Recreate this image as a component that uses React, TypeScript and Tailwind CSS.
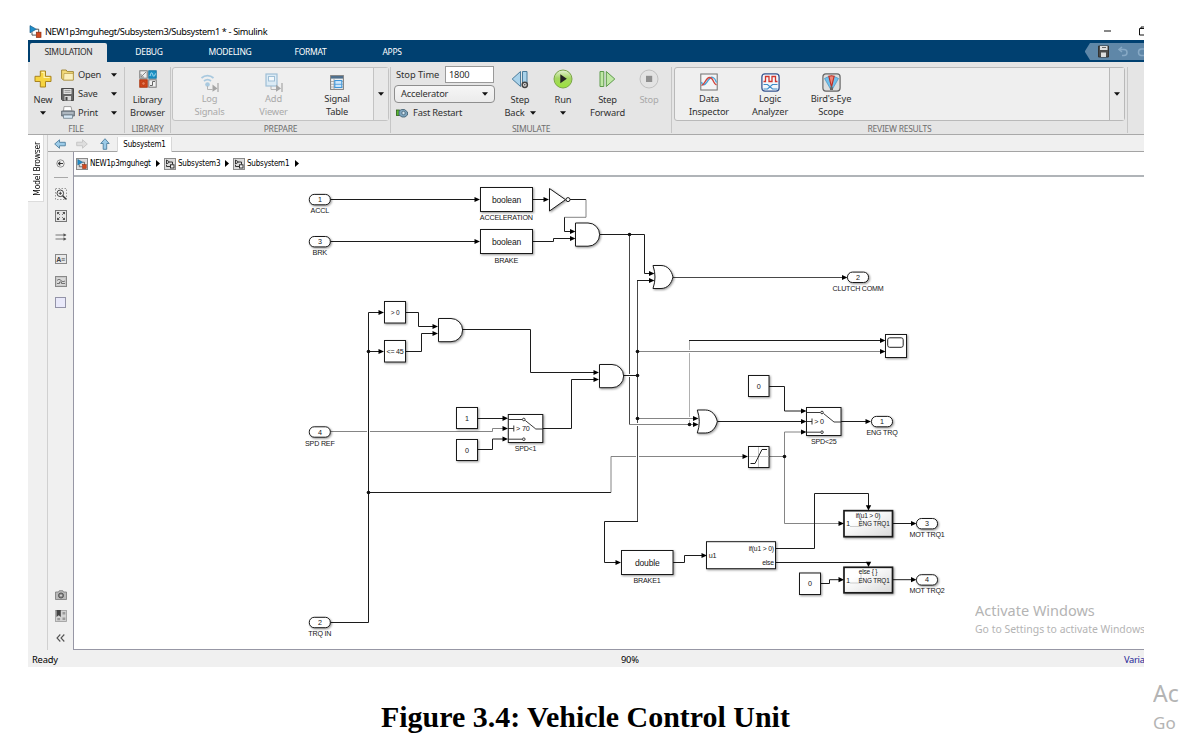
import React from 'react';
import type { ReactNode } from 'react';

/* ---------- small helpers ---------- */

function Caret({ className = '' }: { className?: string }) {
  return (
    <svg className={`h-[4px] w-[6px] shrink-0 ${className}`} viewBox="0 0 6 4">
      <path d="M0 .3h6L3 3.8z" fill="#111" />
    </svg>
  );
}

function Floppy({ className = '' }: { className?: string }) {
  return (
    <svg className={`shrink-0 ${className}`} viewBox="0 0 13 13">
      <path d="M.5.5h12v12h-11l-1-1z" fill="#666" stroke="#4a4a4a" />
      <rect x="2.5" y="1" width="8" height="5" fill="#e2e2e2" />
      <path d="M3.5 2.5h6M3.5 4.3h6" stroke="#888" strokeWidth=".8" />
      <rect x="3.5" y="8" width="6.5" height="4.5" fill="#d8d8d8" />
      <rect x="4.5" y="9" width="2" height="3.5" fill="#444" />
    </svg>
  );
}

function ModelIcon({ className = '' }: { className?: string }) {
  return (
    <svg className={`shrink-0 ${className}`} viewBox="0 0 13 13">
      <path d="M7 4.2h2.700V8M3 7.200v2.900h4" fill="none" stroke="#444" strokeWidth=".9" />
      <path d="M1 .6l6.300 3.600L1 7.800z" fill="#1f8fcb" stroke="#1b5c86" strokeWidth=".7" />
      <rect x="7.300" y="7.200" width="4.700" height="5.200" fill="#d5491d" stroke="#8c2c0f" strokeWidth=".7" />
    </svg>
  );
}

/* ---------- ribbon ---------- */

function Group({ label, className, children }: { label: string; className: string; children?: ReactNode }) {
  return (
    <div className={`flex h-full shrink-0 flex-col pt-[4px] ${className}`}>
      <div className="flex h-[56px] shrink-0">{children}</div>
      <div className="h-[13px] text-center text-[8.5px] leading-[14px] tracking-[-0.25px] text-[#6e6e6e]">{label}</div>
    </div>
  );
}

function Divider() {
  return <div className="mt-[5px] h-[66px] w-px shrink-0 bg-[#c6c6c6]" />;
}

function Tool({ icon, lines, className, muted = false, boxed = false, caret = '' }: {
  icon: ReactNode; lines: string[]; className: string; muted?: boolean; boxed?: boolean; caret?: '' | 'inline' | 'below';
}) {
  return (
    <div className={`flex shrink-0 flex-col items-center ${className}`}>
      <div className="flex h-[20px] shrink-0 items-center justify-center">{icon}</div>
      <div className={`text-center text-[9.3px] leading-[12.5px] tracking-[-0.17px] whitespace-nowrap ${boxed ? 'pt-px' : 'pt-[5px]'} ${muted ? 'text-[#a9a9a9]' : 'text-[#303030]'}`}>
        {lines.map((l, i) => (
          <div key={l} className="flex items-center justify-center">
            {l}
            {caret === 'inline' && i === lines.length - 1 && <Caret className="ml-[5px]" />}
          </div>
        ))}
      </div>
      {caret === 'below' && <Caret className="mt-[4px]" />}
    </div>
  );
}

const PlusIcon = (
  <svg className="h-[18px] w-[18px]" viewBox="0 0 18 18">
    <path d="M6.3 1h5.2v5.3H17v5.2h-5.5V17H6.3v-5.5H1V6.3h5.3z" fill="#f6d441" stroke="#a98420" strokeWidth="1" />
    <path d="M7.5 2.3h2.6v5.2h5.5" fill="none" stroke="#fff3b0" strokeWidth="1.2" />
  </svg>
);

const LibraryIcon = (
  <svg className="h-[18px] w-[18px]" viewBox="0 0 18 18">
    <rect x=".8" y=".8" width="7.4" height="7.4" fill="#eee" stroke="#777" />
    <path d="M2 7l5-5M2 4v3h3" stroke="#888" fill="none" />
    <rect x="9.8" y=".8" width="7.4" height="7.4" fill="#1c93c7" stroke="#1674a0" />
    <path d="M11 6c1-4 2-4 2.700-1.500S15.500 7 16.500 3.500" stroke="#bfe6f6" fill="none" strokeWidth=".9" />
    <rect x=".8" y="9.800" width="7.4" height="7.4" fill="#d4471b" stroke="#a7330f" />
    <circle cx="4.500" cy="13.500" r="1.800" fill="#e87b55" stroke="#a7330f" strokeWidth=".7" />
    <rect x="9.800" y="9.800" width="7.4" height="7.4" fill="#f1f1f1" stroke="#777" />
    <path d="M11 15.500h2.500v-4H16" stroke="#666" fill="none" />
  </svg>
);

const LogIcon = (
  <svg className="h-[20px] w-[20px]" viewBox="0 0 20 20" fill="none">
    <path d="M1.500 6a9 9 0 0 1 12 0M4 9a5.500 5.500 0 0 1 7 0" stroke="#a9c9df" strokeWidth="1.700" />
    <circle cx="7.500" cy="12.500" r="2.300" fill="#a9c9df" />
    <path d="M7.500 14v3.500h5" stroke="#b5b5b5" />
    <path d="M12.500 12.500l5 4-5 3.300z" fill="#a5a5a5" />
    <path d="M18 11v9" stroke="#a5a5a5" strokeWidth="1.200" />
  </svg>
);

const ViewerIcon = (
  <svg className="h-[20px] w-[20px]" viewBox="0 0 20 20" fill="none">
    <rect x="2" y="2" width="11" height="12" fill="#dcebf5" stroke="#9fbfd6" strokeWidth="1.200" />
    <rect x="4.500" y="4.500" width="6" height="4.500" fill="#f3f8fb" stroke="#9fbfd6" />
    <path d="M7 14v3.500h5" stroke="#b5b5b5" />
    <path d="M12 12.500l5 4-5 3.300z" fill="#a5a5a5" />
    <path d="M18 11v9" stroke="#a5a5a5" strokeWidth="1.200" />
  </svg>
);

const TableIcon = (
  <svg className="h-[15px] w-[14px]" viewBox="0 0 14 15" fill="none">
    <rect x=".6" y=".6" width="12.800" height="13.800" fill="#f4f4f4" stroke="#7d7d7d" />
    <rect x="1" y="1" width="12" height="2.600" fill="#4f6f8c" />
    <path d="M1 6.500h12M1 9.300h12M1 12h12M4 3.500v11" stroke="#9c9c9c" strokeWidth=".8" />
    <rect x="4.800" y="5.500" width="7" height="7" fill="#cfe7fb" stroke="#3f97da" strokeWidth="1.100" />
    <path d="M5 9.300h6.600" stroke="#3f97da" strokeWidth=".8" />
  </svg>
);

const StepBackIcon = (
  <svg className="h-[19px] w-[18px]" viewBox="0 0 18 19">
    <path d="M9.500 1.500v15L1.200 9z" fill="#a9d2ea" stroke="#4b7c9b" />
    <path d="M11.500 1.500h4.500v12h-4.500z" fill="#a9d2ea" stroke="#4b7c9b" />
    <circle cx="13.800" cy="14.800" r="2.600" fill="#ddd" stroke="#444" strokeWidth="1.500" />
    <circle cx="13.800" cy="14.800" r=".8" fill="#444" />
  </svg>
);

const RunIcon = (
  <svg className="h-[20px] w-[20px]" viewBox="0 0 20 20">
    <defs>
      <linearGradient id="run" x1="0" y1="0" x2="0" y2="1">
        <stop offset="0" stopColor="#e6f2d8" />
        <stop offset=".45" stopColor="#a5d663" />
        <stop offset="1" stopColor="#9be23a" />
      </linearGradient>
    </defs>
    <circle cx="10" cy="10" r="9" fill="url(#run)" stroke="#7ba648" strokeWidth="1" />
    <path d="M7.300 5.300v9l6.500-4.500z" fill="#222" />
  </svg>
);

const StepForwardIcon = (
  <svg className="h-[18px] w-[17px]" viewBox="0 0 17 18">
    <path d="M1 1.500h3.800v15H1zM7.300 1.500v15L15.800 9z" fill="#bfe8a5" stroke="#5d9a4b" />
  </svg>
);

const StopIcon = (
  <svg className="h-[20px] w-[20px]" viewBox="0 0 20 20">
    <circle cx="10" cy="10" r="9" fill="#e3e3e3" stroke="#c0c0c0" />
    <rect x="7" y="6.800" width="6.200" height="6.200" fill="#8f8f8f" />
  </svg>
);

const InspectorIcon = (
  <svg className="h-[18px] w-[18px]" viewBox="0 0 18 18" fill="none">
    <rect x=".8" y="1" width="16.400" height="16" fill="#f5f5f5" stroke="#707070" />
    <path d="M1.500 9C2.500 13 4.500 12.500 7 9s3.500-5.500 6-4.500c2 .8 2.800 3 3.500 5" stroke="#4aa3d8" strokeWidth="1.300" />
    <path d="M1.500 12.500C5 11.500 6 4.500 9.500 4.500c2.500 0 3 1.800 4 4s2 3 3 3.500" stroke="#d0433c" strokeWidth="1.300" />
  </svg>
);

const LogicIcon = (
  <svg className="h-[19px] w-[19px]" viewBox="0 0 19 19" fill="none">
    <rect x=".9" y=".9" width="17.200" height="17.200" rx="3" fill="#f3f6fb" stroke="#37548f" strokeWidth="1.300" />
    <path d="M2.500 8.500h2v-5H8v5h3v-5h3.500v5h2" stroke="#d0342c" strokeWidth="1.300" />
    <path d="M2.500 11.500h4l5 4.500h5M2.500 16h4l5-4.500h5" stroke="#3f8dc9" strokeWidth="1.200" />
  </svg>
);

const BirdIcon = (
  <svg className="h-[19px] w-[19px]" viewBox="0 0 19 19" fill="none">
    <rect x=".9" y=".9" width="17.200" height="17.200" rx="3" fill="#dedede" stroke="#676767" strokeWidth="1.200" />
    <path d="M2.500 5.500Q9.500 1 16.500 5.500L10.500 16h-2z" fill="#6fc0ec" stroke="#3a88b8" strokeWidth=".6" />
    <path d="M6.800 3.200q2.700-1 5.400 0L9.500 14z" fill="#ef8577" stroke="#bd2e24" strokeWidth="1.100" />
    <path d="M8 17v-2.500l1.500-1.500 1.500 1.500V17z" fill="#666" />
  </svg>
);

function FileRow({ icon, label }: { icon: ReactNode; label: string }) {
  return (
    <div className="flex h-[19px] items-center">
      <div className="flex w-[17px] items-center">{icon}</div>
      <span className="w-[33px] text-[9.300px] tracking-[-0.2px] text-[#303030]">{label}</span>
      <Caret />
    </div>
  );
}

function Ribbon() {
  return (
    <div className="flex h-[73px] shrink-0 overflow-hidden border-b border-[#a9a9a9] bg-[#e5e5e5]">
      <Group label="FILE" className="w-[96px]">
        <Tool icon={PlusIcon} lines={['New']} className="w-[30px] pt-[3px]" caret="below" />
        <div className="flex flex-col pl-[3px]">
          <FileRow label="Open" icon={
            <svg className="h-[12px] w-[13px]" viewBox="0 0 13 12">
              <path d="M.6 1h4.600l1 1.600h6.200V11H2.500L.6 9.500z" fill="#f2d978" stroke="#9c8130" strokeWidth=".9" />
              <path d="M3 4.500h9.300V11H2.600z" fill="#fbf0bd" stroke="#b59a46" strokeWidth=".7" />
            </svg>} />
          <FileRow label="Save" icon={<Floppy className="h-[13px] w-[13px]" />} />
          <FileRow label="Print" icon={
            <svg className="h-[13px] w-[14px]" viewBox="0 0 14 13">
              <path d="M3 .6h7l1 4.400H2.500z" fill="#fff" stroke="#888" strokeWidth=".8" />
              <path d="M.6 5h12.800v5H.6z" fill="#8d97a1" stroke="#59636d" strokeWidth=".8" />
              <path d="M1.500 7h11" stroke="#cfd8e0" />
              <path d="M2.500 9h9v3.300h-9z" fill="#d7e8f5" stroke="#6d7d8b" strokeWidth=".8" />
            </svg>} />
        </div>
      </Group>
      <Divider />
      <Group label="LIBRARY" className="w-[45px]">
        <Tool icon={LibraryIcon} lines={['Library', 'Browser']} className="w-[45px] pt-[3px]" />
      </Group>
      <Divider />
      <Group label="PREPARE" className="w-[219px]">
        <div className="mt-px ml-px flex h-[54px] w-[217px] rounded-[3px] border border-[#c3c3c3] bg-[#efefef]">
          <Tool boxed muted icon={LogIcon} lines={['Log', 'Signals']} className="w-[73px] pt-[4px]" />
          <Tool boxed muted icon={ViewerIcon} lines={['Add', 'Viewer']} className="w-[55px] pt-[4px]" />
          <Tool boxed icon={TableIcon} lines={['Signal', 'Table']} className="w-[72px] pt-[4px]" />
          <div className="flex grow items-center justify-center border-l border-[#c3c3c3] bg-[#e8e8e8]"><Caret /></div>
        </div>
      </Group>
      <Divider />
      <Group label="SIMULATE" className="w-[280px]">
        <div className="flex w-[104px] flex-col pl-[3px] text-[9.300px] tracking-[-0.2px] text-[#303030]">
          <div className="flex h-[17px] items-center">
            <span className="w-[51px] pl-[2px] tracking-[-0.05px] whitespace-nowrap">Stop Time</span>
            <div className="flex h-[17px] w-[49px] items-center border border-[#9a9a9a] bg-white pl-[3px]">1800</div>
          </div>
          <div className="mt-[2px] flex h-[18px] w-[101px] items-center justify-between rounded-[4px] border border-[#8e8e8e] bg-linear-to-b from-[#f6f6f6] to-[#ebebeb] pr-[6px] pl-[6px]">
            Accelerator<Caret />
          </div>
          <div className="mt-[1px] flex h-[18px] items-center pl-[2px]">
            <svg className="mr-[5px] h-[10px] w-[12px]" viewBox="0 0 12 10">
              <rect x=".5" y="2" width="3" height="5.500" fill="#59b82f" stroke="#2c5d1a" strokeWidth=".8" />
              <path d="M3 3l2.500-1.500h3L11.500 4v3L9 9H6L3 7z" fill="#7ca3bd" stroke="#3e5a6c" strokeWidth=".8" />
              <circle cx="7.500" cy="5" r="1.700" fill="#d3e6f2" stroke="#3e5a6c" strokeWidth=".7" />
            </svg>
            <span className="whitespace-nowrap">Fast Restart</span>
          </div>
        </div>
        <Tool icon={StepBackIcon} lines={['Step', 'Back']} className="w-[50px] pt-[3px]" caret="inline" />
        <Tool icon={RunIcon} lines={['Run']} className="w-[36px] pt-[3px]" caret="below" />
        <Tool icon={StepForwardIcon} lines={['Step', 'Forward']} className="w-[53px] pt-[3px]" />
        <Tool muted icon={StopIcon} lines={['Stop']} className="w-[30px] pt-[3px]" />
      </Group>
      <Divider />
      <Group label="REVIEW RESULTS" className="w-[455px]">
        <div className="mt-px ml-[2px] flex h-[54px] w-[451px] rounded-[3px] border border-[#b9b9b9] bg-[#efefef]">
          <Tool boxed icon={InspectorIcon} lines={['Data', 'Inspector']} className="w-[68px] pt-[4px]" />
          <Tool boxed icon={LogicIcon} lines={['Logic', 'Analyzer']} className="w-[54px] pt-[4px]" />
          <Tool boxed icon={BirdIcon} lines={["Bird's-Eye", 'Scope']} className="w-[68px] pt-[4px]" />
          <div className="ml-auto flex w-[15px] items-center justify-center border-l border-[#b9b9b9] bg-[#eaeaea]"><Caret /></div>
        </div>
      </Group>
      <Divider />
    </div>
  );
}

function MenuTab({ label, className }: { label: string; className: string }) {
  return <div className={`flex shrink-0 items-center justify-center ${className}`}>{label}</div>;
}

function MenuBar() {
  return (
    <div className="flex h-[22px] shrink-0 overflow-hidden bg-[#004070] text-[8.500px] tracking-[-0.3px] text-white">
      <MenuTab label="SIMULATION" className="mt-[3px] ml-[2px] w-[77px] rounded-t-[2px] bg-[#e5e5e5] tracking-[-0.35px] text-[#2f2f2f]" />
      <MenuTab label="DEBUG" className="w-[84px] pt-[2px]" />
      <MenuTab label="MODELING" className="w-[78px] pt-[2px]" />
      <MenuTab label="FORMAT" className="w-[83px] pt-[2px]" />
      <MenuTab label="APPS" className="w-[80px] pt-[2px]" />
      <div className="mt-[3px] ml-auto flex h-[17px] w-[60px] shrink-0">
        <svg className="h-[17px] w-[60px]" viewBox="0 0 60 17" fill="none">
          <path d="M6 0h54v17H6L1 9V8z" fill="#5f87a8" />
          <path d="M14.500 3h10v11h-10z" fill="#4c4c4c" stroke="#333" />
          <path d="M16 3h7.500v4H16zM17 9.500h5V14h-5z" fill="#dedede" />
          <path d="M18 4.500h4" stroke="#666" />
          <path d="M38 4l-3 2.500L38 9M35.500 6.500h4.500c4 0 4 6 0 6h-2" stroke="#87a9c5" strokeWidth="1.500" />
          <path d="M60 6h-2.500c-4 0-4 6.500 0 6.500H60" stroke="#87a9c5" strokeWidth="1.500" />
        </svg>
      </div>
    </div>
  );
}

/* ---------- navigation ---------- */

function NavArrow({ className, fill, stroke }: { className: string; fill: string; stroke: string }) {
  return (
    <svg className={`h-[10px] w-[12px] shrink-0 ${className}`} viewBox="0 0 12 10">
      <path d="M.7 5L5.500.8v2.500h5.800v3.500H5.500v2.500z" fill={fill} stroke={stroke} strokeWidth=".9" />
    </svg>
  );
}

function SubsystemIcon() {
  return (
    <svg className="h-[12px] w-[12px] shrink-0" viewBox="0 0 12 12" fill="none">
      <rect x=".5" y=".5" width="11" height="11" fill="#dcdcdc" stroke="#8a8a8a" />
      <path d="M2.500 2l3 2-3 2zM5.500 4h3v2.500M2.500 7v1.500h3.500" stroke="#222" strokeWidth=".9" />
      <rect x="6.500" y="6.800" width="3.500" height="3.200" fill="#f3f3f3" stroke="#222" strokeWidth=".9" />
    </svg>
  );
}

function Crumb({ icon, label, className }: { icon: ReactNode; label: string; className: string }) {
  return (
    <div className={`flex shrink-0 items-center ${className}`}>
      {icon}
      <span className="ml-[2px] grow pt-px whitespace-nowrap">{label}</span>
      <svg className="h-[7px] w-[4px] shrink-0" viewBox="0 0 4 7"><path d="M0 0l4 3.500L0 7z" fill="#000" /></svg>
    </div>
  );
}

function ToolStrip() {
  const box = 'flex h-[21.8px] w-[26px] shrink-0 items-center justify-center';
  return (
    <div className="flex w-[25px] shrink-0 flex-col items-center bg-[#f0f0f0] pb-px">
      <div className="flex h-[23px] shrink-0 items-center justify-center">
        <svg className="h-[9px] w-[9px]" viewBox="0 0 9 9" fill="none">
          <circle cx="4.500" cy="4.500" r="3.700" stroke="#777" strokeWidth=".8" />
          <path d="M7 4.500H2.500M4.300 2.700L2.500 4.500l1.800 1.800" stroke="#333" strokeWidth="1.100" />
        </svg>
      </div>
      <div className="mt-[2px] h-px w-[14px] shrink-0 bg-[#a8a8a8]" />
      <div className="h-[5px] shrink-0" />
      <div className={box}>
        <svg className="h-[12px] w-[12px]" viewBox="0 0 12 12" fill="none">
          <rect x=".5" y=".5" width="11" height="11" stroke="#999" strokeDasharray="1.500 1.500" />
          <circle cx="5.300" cy="5.300" r="3.300" fill="#f4f4f4" stroke="#444" />
          <path d="M3.700 5.300h3.200M5.300 3.700v3.200" stroke="#333" strokeWidth=".9" />
          <path d="M7.700 7.700l3.500 3.500" stroke="#333" strokeWidth="1.600" />
        </svg>
      </div>
      <div className={box}>
        <svg className="h-[12px] w-[12px]" viewBox="0 0 12 12" fill="none">
          <rect x=".5" y=".5" width="11" height="11" fill="#e6e6e6" stroke="#777" />
          <path d="M2 2h2.600L2 4.600zM10 2v2.600L7.400 2zM10 10H7.400L10 7.400zM2 10V7.400L4.600 10z" fill="#444" />
          <path d="M2 2l2.800 2.800M10 2L7.200 4.800M10 10L7.200 7.200M2 10l2.800-2.800" stroke="#555" strokeWidth=".9" />
        </svg>
      </div>
      <div className={box}>
        <svg className="h-[8px] w-[12px]" viewBox="0 0 12 8" fill="none">
          <path d="M.5 2h10M.5 6h10" stroke="#777" />
          <path d="M8.500.2L11.500 2l-3 1.800zM8.500 4.200l3 1.800-3 1.800z" fill="#555" />
        </svg>
      </div>
      <div className={box}>
        <div className="flex h-[10px] w-[12px] items-center justify-center border border-[#888] bg-[#e9e9e9] font-['Liberation_Sans',sans-serif] text-[7px] leading-none font-bold tracking-[-0.3px] text-[#444]">A≡</div>
      </div>
      <div className={box}>
        <svg className="h-[11px] w-[12px]" viewBox="0 0 12 11" fill="none">
          <rect x=".5" y=".5" width="11" height="10" fill="#c9c9c9" stroke="#888" />
          <rect x="2" y="2" width="8" height="7" fill="#dadada" />
          <path d="M2 4.500c1.500-1.500 2.500-1.500 4 0s2.500 1.200 4 .5M2 7.500h2.500V6H6.500v1.500H10" stroke="#666" strokeWidth=".9" />
        </svg>
      </div>
      <div className={box}><div className="h-[11px] w-[11px] border border-[#9393a8] bg-[#e9e9fa]" /></div>
      <div className="grow" />
      <div className={box}>
        <svg className="h-[10px] w-[12px]" viewBox="0 0 12 10" fill="none">
          <path d="M.5 2h3l.8-1.300h3.500L8.500 2h3v7.500H.5z" fill="#b9b9b9" stroke="#777" strokeWidth=".8" />
          <circle cx="6" cy="5.500" r="2.500" fill="#888" stroke="#555" />
          <circle cx="6" cy="5.500" r=".9" fill="#ddd" />
        </svg>
      </div>
      <div className={box}>
        <svg className="h-[12px] w-[12px]" viewBox="0 0 12 12">
          <rect x=".5" y=".5" width="11" height="11" fill="#d3d3d3" stroke="#999" strokeWidth=".8" />
          <path d="M1.500 0h4.300v7L3.700 5.300 1.500 7z" fill="#444" />
          <path d="M7.500 2h2.800v2.500H7.500zM7.500 7.500h2.800V10H7.500zM2.300 8h2.800v2.300H2.300z" fill="#999" />
        </svg>
      </div>
      <div className={box}>
        <svg className="h-[8px] w-[9px]" viewBox="0 0 9 8" fill="none">
          <path d="M4.300.5L1 4l3.300 3.500M8.300.5L5 4l3.300 3.500" stroke="#555" strokeWidth="1.100" />
        </svg>
      </div>
    </div>
  );
}

/* ---------- block diagram ---------- */

const shadow = 'drop-shadow-[1.300px_1.500px_0.800px_rgba(0,0,0,0.42)]';

function Txt({ x, y, s, w, size = 7.2 }: { x: number; y: number; s: string; w?: number; size?: number }) {
  return (
    <text x={x} y={y} dy=".36em" textAnchor="middle" fontSize={size} fill="#161616"
      {...(w ? { textLength: w, lengthAdjust: 'spacingAndGlyphs' as const } : {})}>{s}</text>
  );
}

function Port({ x, y, n, label, w }: { x: number; y: number; n: string; label: string; w: number }) {
  return (
    <g>
      <rect className={shadow} x={x} y={y - 5.2} width="21" height="10.400" rx="4.900" fill="#fff" stroke="#1a1a1a" />
      <Txt x={x + 10.500} y={y} s={n} />
      <Txt x={x + 10.500} y={y + 11} s={label} w={w} />
    </g>
  );
}

function Box({ x, y, w, h, s, size, tw, thick = false, fill = '#fff' }: {
  x: number; y: number; w: number; h: number; s?: string; size?: number; tw?: number; thick?: boolean; fill?: string;
}) {
  return (
    <g>
      <rect className={shadow} x={x} y={y} width={w} height={h} fill={fill} stroke="#1a1a1a" strokeWidth={thick ? 1.7 : 1} />
      {s && <Txt x={x + w / 2} y={y + h / 2} s={s} size={size} w={tw} />}
    </g>
  );
}

function And({ x, y }: { x: number; y: number }) {
  return <path className={shadow} d={`M${x} ${y}h12.500a11.600 11.600 0 0 1 0 23.200h-12.500z`} fill="#fff" stroke="#1a1a1a" />;
}

function Or({ x, y }: { x: number; y: number }) {
  return <path className={shadow} d={`M${x} ${y}h8c6.500 0 10.500 5 12 11.500c-1.500 6.500-5.500 11.500-12 11.500h-8q4-11.500 0-23z`} fill="#fff" stroke="#1a1a1a" />;
}

function Wire({ d, soft = false }: { d: string; soft?: boolean }) {
  return <path d={d} fill="none" stroke={soft ? '#777' : '#1c1c1c'} strokeWidth={soft ? 0.9 : 1} />;
}

function Head({ x, y, down = false }: { x: number; y: number; down?: boolean }) {
  return <path d={down ? `M${x} ${y}l-2.700 -5.200h5.400z` : `M${x} ${y}l-5.500 -2.600v5.200z`} fill="#000" />;
}

function Switch({ x, y, s, label, lw }: { x: number; y: number; s: string; label: string; lw: number }) {
  return (
    <g>
      <Box x={x} y={y} w={34.500} h={28} />
      <path d={`M${x} ${y + 5}h14M${x} ${y + 14}h5.500m0 -3v6M${x} ${y + 24.700}h14M${x + 17} ${y + 6}l10.500 8.500h7`} fill="none" stroke="#222" strokeWidth=".9" />
      <circle cx={x + 15.500} cy={y + 5} r="1.300" fill="#fff" stroke="#222" strokeWidth=".9" />
      <circle cx={x + 15.500} cy={y + 24.700} r="1.300" fill="#fff" stroke="#222" strokeWidth=".9" />
      <Txt x={x + (s.length > 3 ? 14.500 : 12.500)} y={y + 14.200} s={s} />
      <Txt x={x + 17.200} y={y + 34.300} s={label} w={lw} />
    </g>
  );
}

const dots: [number, number][] = [
  [368.5, 351.5], [368.5, 492.5], [629.5, 234.5], [637.500, 351.500], [637.500, 375.500],
  [637.500, 418.500], [689.500, 424.500], [784.500, 456.500],
];

const heads: [number, number][] = [
  [480, 199.500], [480, 241.500], [549, 199.500], [575.500, 231.500], [575.500, 238.500], [384, 312.500],
  [384, 351.500], [438, 326.500], [438, 333.500], [599, 372.500], [599, 379.500], [508, 418.300], [508, 428.500],
  [508, 439], [654.500, 273.500], [654.500, 280.500], [847.500, 277.500], [885.500, 340.500], [885.500, 351.500],
  [698.500, 418.500], [698.500, 424.500], [806.500, 411], [806.500, 421.500], [806.500, 432], [871, 421.500],
  [748, 456.500], [844, 523.500], [844, 579.700], [916.500, 523.500], [916.500, 579.700], [621, 562.500], [707, 555.500],
];

function Diagram() {
  return (
    <svg className="block h-[472px] w-[1070px] shrink-0 font-['Liberation_Sans',Arial,sans-serif]" viewBox="74 177 1070 472">
      <defs>
        <linearGradient id="sub" x1="0" y1="0" x2="1" y2="1">
          <stop offset=".3" stopColor="#fff" />
          <stop offset="1" stopColor="#d9d9d9" />
        </linearGradient>
      </defs>

      <Wire soft d="M330 431.500H367M370 431.500H492.500V428.500H504" />
      <Wire d="M330 199.500H476M330 241.500H476M532 199.500H545M570 199.500H586" />
      <Wire soft d="M586 199.500V217.300H564.500" />
      <Wire d="M564.500 217.300V231.500H571M532 241.500H553.500V238.500H571" />
      <Wire d="M330 622.500H368.500V312.500H380M368.500 351.500H380M405 312.500H418.500V326.500H434M405 351.500H421.500V333.500H434" />
      <Wire d="M462 329.500H530.500V372.500H595M542 428.500H571.500V379.500H595M477 418.500H504M477 449.500H492.500V439H504" />
      <Wire d="M368.500 492.500H611" />
      <Wire soft d="M611 492.500V456.500H636M639 456.500H744" />
      <Wire d="M599 234.500H644.500V273.500H651" />
      <path d="M629.500 234.500V374M629.500 377V424.500M637.500 280.500V423M637.500 426V521.500" stroke="#484848" />
      <Wire d="M623 375.500H637.500M651 280.500H637M638 521.500H604.500V562.500H617" />
      <path d="M672 277.500H843" stroke="#484848" />
      <Wire soft d="M637.500 351.500H881M637.500 418.500H695M629.500 424.500H695" />
      <path d="M689.500 424.500V420M689.500 417V353M689.500 350V340.500" stroke="#b0b0b0" />
      <Wire d="M689 340.500H881M717 421.500H802M769 386.500H784.500V411H802M840 421.500H867" />
      <Wire soft d="M769 456.500H784.500M802 432H784.500V523.500H840" />
      <Wire d="M775 548.500H814.500V493.500H868.500V506M775 562.500H868.500M672 562.500H684.500V555.500H703M820 583.500H829.500V579.700H840M892 523.500H912M892 579.700H912" />

      {dots.map(([x, y]) => <circle key={`${x}-${y}`} cx={x} cy={y} r="1.800" fill="#111" />)}

      <Port x={309.300} y={199.600} n="1" label="ACCL" w={18.500} />
      <Port x={309.300} y={241.700} n="3" label="BRK" w={14.500} />
      <Port x={309.300} y={432} n="4" label="SPD REF" w={29.500} />
      <Port x={309.300} y={622.500} n="2" label="TRQ IN" w={23} />
      <Port x={847.500} y={277.300} n="2" label="CLUTCH COMM" w={51} />
      <Port x={871.500} y={421.600} n="1" label="ENG TRQ" w={31} />
      <Port x={916.500} y={523.700} n="3" label="MOT TRQ1" w={35} />
      <Port x={916.500} y={579.900} n="4" label="MOT TRQ2" w={35} />

      <Box x={480.500} y={187.500} w={52} h={24} s="boolean" size={9} tw={29} />
      <Txt x={506.300} y={217.500} s="ACCELERATION" w={53} />
      <Box x={480.500} y={229.500} w={52} h={24} s="boolean" size={9} tw={29} />
      <Txt x={506.300} y={260} s="BRAKE" w={23.500} />
      <path className={shadow} d="M549.500 188.500V211L565.500 199.700z" fill="#fff" stroke="#1a1a1a" />
      <circle cx="568" cy="199.600" r="2" fill="#fff" stroke="#1a1a1a" />
      <And x={575.500} y={223} />
      <And x={438.500} y={318.500} />
      <And x={599.500} y={364.500} />
      <Or x={653} y={265.500} />
      <Or x={697.300} y={410} />
      <Box x={384.500} y={301.500} w={21} h={21.500} s="> 0" size={6.500} />
      <Box x={384.500} y={340.500} w={21} h={21.500} s="<= 45" size={6.500} tw={17} />
      <Box x={456.500} y={407.500} w={21} h={21} s="1" />
      <Box x={456.500} y={439.500} w={21} h={21} s="0" />
      <Switch x={508.300} y={414.500} s="> 70" label="SPD<1" lw={21.500} />
      <Switch x={806.500} y={407.500} s="> 0" label="SPD<25" lw={25.500} />
      <Box x={748.500} y={375.500} w={20.500} h={21} s="0" />
      <Box x={748.500} y={446.500} w={20.500} h={21} />
      <path d="M758.500 447V467M749 456.500H769" stroke="#b5b5b5" strokeWidth=".8" />
      <path d="M750.500 463.500h4.500l7-14h5" fill="none" stroke="#222" />
      <Box x={885.500} y={334.500} w={21} h={23} />
      <rect x="887.700" y="337.800" width="15.500" height="9.500" rx="2" fill="#fff" stroke="#222" />
      <Box x={621.500} y={550.500} w={51.500} h={24} s="double" size={9} tw={24.500} />
      <Txt x={647} y={580.500} s="BRAKE1" w={27} />
      <Box x={706.500} y={541.700} w={69} h={27} />
      <Txt x={712.500} y={555.500} s="u1" />
      <Txt x={761.300} y={548.500} s="if(u1 > 0)" w={25} />
      <Txt x={768} y={562.500} s="else" w={11.500} size={6.500} />
      <Box x={799.500} y={573} w={21} h={21.500} s="0" />
      <Box x={844} y={510.700} w={48.500} h={26} thick fill="url(#sub)" />
      <Box x={844} y={567.300} w={48.500} h={25.500} thick fill="url(#sub)" />
      <path d="M850 526.500h11v-10M850 583h11v-10" fill="none" stroke="#ccc" />
      <Txt x={868} y={515.500} s="if(u1 > 0)" w={24.500} size={6.800} />
      <Txt x={868} y={571.800} s="else { }" w={18.500} size={6.800} />
      <Txt x={848} y={524} s="1" size={6.800} />
      <Txt x={848} y={580.300} s="1" size={6.800} />
      <Txt x={874} y={524} s="ENG TRQ1" w={31} size={6.800} />
      <Txt x={874} y={580.300} s="ENG TRQ1" w={31} size={6.800} />

      {heads.map(([x, y]) => <Head key={`${x}-${y}`} x={x} y={y} />)}
      <Head down x={868.500} y={510.500} />
      <Head down x={868.500} y={567} />
    </svg>
  );
}

/* ---------- window ---------- */

export default function App() {
  return (
    <div className="relative flex h-[741px] w-[1180px] flex-col overflow-hidden bg-white pt-[22px] font-['Noto_Sans',sans-serif]">
      <div className="ml-[28px] flex h-[645px] w-[1116px] shrink-0 flex-col overflow-hidden">
        <div className="flex h-[18px] shrink-0 items-center pl-[1px]">
          <ModelIcon className="h-[13px] w-[13px]" />
          <span className="ml-[3px] pt-px text-[9.200px] tracking-[-0.37px] whitespace-nowrap text-black">NEW1p3mguhegt/Subsystem3/Subsystem1 * - Simulink</span>
          <svg className="mr-0 ml-auto h-[10px] w-[41px]" viewBox="0 0 41 10" fill="none">
            <path d="M1 5h7" stroke="#111" />
            <path d="M41 2.500h-4.500V9H41M38 2.500V1h3" stroke="#111" />
          </svg>
        </div>
        <MenuBar />
        <Ribbon />
        <div className="flex h-[515px] shrink-0 bg-[#f0f0f0]">
          <div className="flex w-[20px] shrink-0 border-r border-[#d0d0d0]">
            <div className="flex h-[67px] w-[16px] items-center justify-center border-r border-b border-[#dcdcdc] bg-white pt-[2px] pl-[3px]">
              <span className="rotate-180 text-[8.500px] leading-none whitespace-nowrap text-black [writing-mode:vertical-rl] font-['DejaVu_Sans_Condensed','DejaVu_Sans',sans-serif] tracking-[-0.2px]">Model Browser</span>
            </div>
          </div>
          <div className="flex grow flex-col overflow-hidden text-[8px] tracking-[-0.2px] text-black font-['DejaVu_Sans_Condensed','DejaVu_Sans',sans-serif]">
            <div className="flex h-[17px] shrink-0 items-center border-b border-[#a4a4a4] pt-[2px] pl-[6px]">
              <NavArrow className="" fill="#9ccbe8" stroke="#4e7f9f" />
              <NavArrow className="ml-[10px] rotate-180" fill="#dedede" stroke="#c4c4c4" />
              <NavArrow className="ml-[11px] rotate-90" fill="#9ccbe8" stroke="#4e7f9f" />
              <div className="ml-[6px] flex h-[15px] w-[55px] items-center justify-center border-x border-[#d8d8d8] bg-white pt-px">Subsystem1</div>
            </div>
            <div className="flex grow overflow-hidden">
              <ToolStrip />
              <div className="flex w-[1071px] shrink-0 flex-col border-b border-l border-[#9797a5] bg-white">
                <div className="flex h-[25px] shrink-0 items-center border-b-2 border-[#b0b4b8] pl-[2px]">
                  <Crumb className="w-[84px]" label="NEW1p3mguhegt" icon={
                    <div className="flex h-[12px] w-[12px] shrink-0 items-center justify-center border border-[#8a8a8a] bg-[#dcdcdc]">
                      <ModelIcon className="h-[10px] w-[10px]" />
                    </div>} />
                  <Crumb className="ml-[4px] w-[65px]" label="Subsystem3" icon={<SubsystemIcon />} />
                  <Crumb className="ml-[4px] w-[66px]" label="Subsystem1" icon={<SubsystemIcon />} />
                </div>
                <Diagram />
              </div>
            </div>
          </div>
        </div>
        <div className="flex h-[17px] shrink-0 items-center bg-[#f0f0f0] pt-[2px] text-[9.300px] tracking-[-0.2px] text-black">
          <span className="w-[593px] pl-[4px]">Ready</span>
          <span className="grow">90%</span>
          <span className="w-[20px] tracking-[-0.3px] whitespace-nowrap text-[#1d1d96]">Varia</span>
        </div>
      </div>
      <div className="mt-[33px] ml-[381px] font-['Liberation_Serif',serif] text-[29.950px] leading-[34px] font-bold whitespace-nowrap text-black">Figure 3.4: Vehicle Control Unit</div>
      <div className="absolute top-[600px] left-[975px] w-[169px] overflow-hidden whitespace-nowrap text-[#b4b4b4]">
        <div className="text-[14.500px] leading-[20px]">Activate Windows</div>
        <div className="text-[10.450px] leading-[18px]">Go to Settings to activate Windows</div>
      </div>
      <div className="absolute top-[678px] left-[1153px] w-[27px] overflow-hidden whitespace-nowrap text-[#b4b4b4]">
        <div className="text-[23px] leading-[30px]">Ac</div>
        <div className="text-[17px] leading-[29px]">Go</div>
      </div>
    </div>
  );
}
